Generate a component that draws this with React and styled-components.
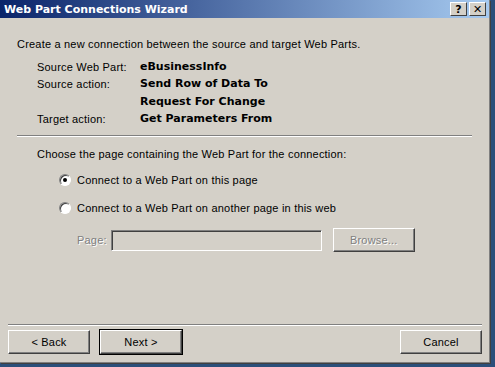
import React from 'react';
import styled, { createGlobalStyle } from 'styled-components';

const Global = createGlobalStyle`
  html, body { margin: 0; padding: 0; background: #2b4f7a; overflow: hidden; }
  body { font-family: "Liberation Sans", sans-serif; font-size: 11px; color: #000; }
`;

const Screen = styled.div`
  width: 495px;
  height: 367px;
  display: flex;
  background: #2b4f7a;
`;

const Window = styled.div`
  width: 489px;
  height: 362px;
  background: #d4d0c8;
  border-right: 1px solid #808080;
  border-bottom: 1px solid #808080;
  box-shadow: 1px 1px 0 #404040;
  display: flex;
  flex-direction: column;
`;

const TitleBar = styled.div`
  height: 18px;
  display: flex;
  align-items: center;
  padding: 0 3px 0 4px;
  background: linear-gradient(to right, #0a246a, #a6caf0);
  color: #fff;
  font-weight: bold;
  font-size: 11px;
  font-family: "DejaVu Sans", sans-serif;
`;

const Title = styled.div`
  flex: 1;
`;

const CapButton = styled.div`
  width: 17px;
  height: 14px;
  margin-left: 2px;
  background: #d4d0c8;
  border: 1px solid;
  border-color: #fff #404040 #404040 #fff;
  box-sizing: border-box;
  display: flex;
  align-items: center;
  justify-content: center;
  color: #000;
  font-size: 11px;
  font-weight: bold;
`;

const Body = styled.div`
  flex: 1;
  padding: 16px 17px 0 17px;
  display: flex;
  flex-direction: column;
  letter-spacing: 0.2px;
`;

const Intro = styled.div`
  margin-top: 4px;
`;

const Info = styled.div`
  display: grid;
  grid-template-columns: 103px auto;
  row-gap: 5px;
  margin: 11px 0 0 20px;
  line-height: 12.3px;
`;

const Value = styled.div`
  font-family: "DejaVu Sans", sans-serif;
  font-weight: bold;
  font-size: 11px;
  letter-spacing: 0;
`;

const Separator = styled.div`
  height: 0;
  border-top: 1px solid #808080;
  border-bottom: 1px solid #fff;
  margin: ${p => p.$m};
`;

const Section = styled.div`
  padding-left: 20px;
  display: flex;
  flex-direction: column;
`;

const RadioRow = styled.label`
  display: flex;
  align-items: center;
  gap: 6px;
  margin-left: 22px;
  margin-top: ${p => p.$mt}px;
`;

const RadioDot = styled.span`
  width: 12px;
  height: 12px;
  border-radius: 50%;
  box-sizing: border-box;
  background: #fff;
  border: 1px solid;
  border-color: #808080 #fff #fff #808080;
  box-shadow: inset 1px 1px 0 #404040;
  display: flex;
  align-items: center;
  justify-content: center;
  &::after {
    content: '';
    width: 4px;
    height: 4px;
    border-radius: 50%;
    background: ${p => (p.$on ? '#000' : 'transparent')};
  }
`;

const PageRow = styled.div`
  display: flex;
  align-items: center;
  margin: 14px 0 0 60px;
  color: #808080;
  text-shadow: 1px 1px 0 #fff;
`;

const PageInput = styled.div`
  width: 211px;
  height: 21px;
  box-sizing: border-box;
  margin-left: 4px;
  border: 1px solid;
  border-color: #808080 #fff #fff #808080;
  box-shadow: inset 1px 1px 0 #404040;
`;

const Button = styled.div`
  width: ${p => p.$w || 82}px;
  height: 24px;
  box-sizing: border-box;
  display: flex;
  align-items: center;
  justify-content: center;
  background: #d4d0c8;
  border: 1px solid;
  border-color: #fff #404040 #404040 #fff;
  box-shadow: inset -1px -1px 0 #808080;
  color: ${p => (p.$disabled ? '#808080' : '#000')};
  text-shadow: ${p => (p.$disabled ? '1px 1px 0 #fff' : 'none')};
  outline: ${p => (p.$def ? '1px solid #000' : 'none')};
  margin-left: ${p => p.$ml || 0}px;
`;

const Spacer = styled.div`
  flex: 1;
`;

const Footer = styled.div`
  display: flex;
  flex-direction: column;
  padding: 0 7px 8px 8px;
  letter-spacing: 0.2px;
`;

const ButtonRow = styled.div`
  display: flex;
  gap: 10px;
  margin-top: 4px;
`;

export default function App() {
  return (
    <Screen>
      <Global />
      <Window>
        <TitleBar>
          <Title>Web Part Connections Wizard</Title>
          <CapButton>?</CapButton>
          <CapButton>✕</CapButton>
        </TitleBar>
        <Body>
          <Intro>Create a new connection between the source and target Web Parts.</Intro>
          <Info>
            <div>Source Web Part:</div>
            <Value>eBusinessInfo</Value>
            <div>Source action:</div>
            <Value>Send Row of Data To</Value>
            <div />
            <Value>Request For Change</Value>
            <div>Target action:</div>
            <Value>Get Parameters From</Value>
          </Info>
          <Separator $m="10px 0 11px 0" />
          <Section>
            <div>Choose the page containing the Web Part for the connection:</div>
            <RadioRow $mt={14}>
              <RadioDot $on />
              Connect to a Web Part on this page
            </RadioRow>
            <RadioRow $mt={16}>
              <RadioDot />
              Connect to a Web Part on another page in this web
            </RadioRow>
          </Section>
          <PageRow>
            Page:
            <PageInput />
            <Button $w={82} $disabled $ml={11}>Browse...</Button>
          </PageRow>
          <Spacer />
        </Body>
        <Footer>
          <Separator $m="0" />
          <ButtonRow>
            <Button>&lt; Back</Button>
            <Button $def>Next &gt;</Button>
            <Spacer />
            <Button>Cancel</Button>
          </ButtonRow>
        </Footer>
      </Window>
    </Screen>
  );
}
